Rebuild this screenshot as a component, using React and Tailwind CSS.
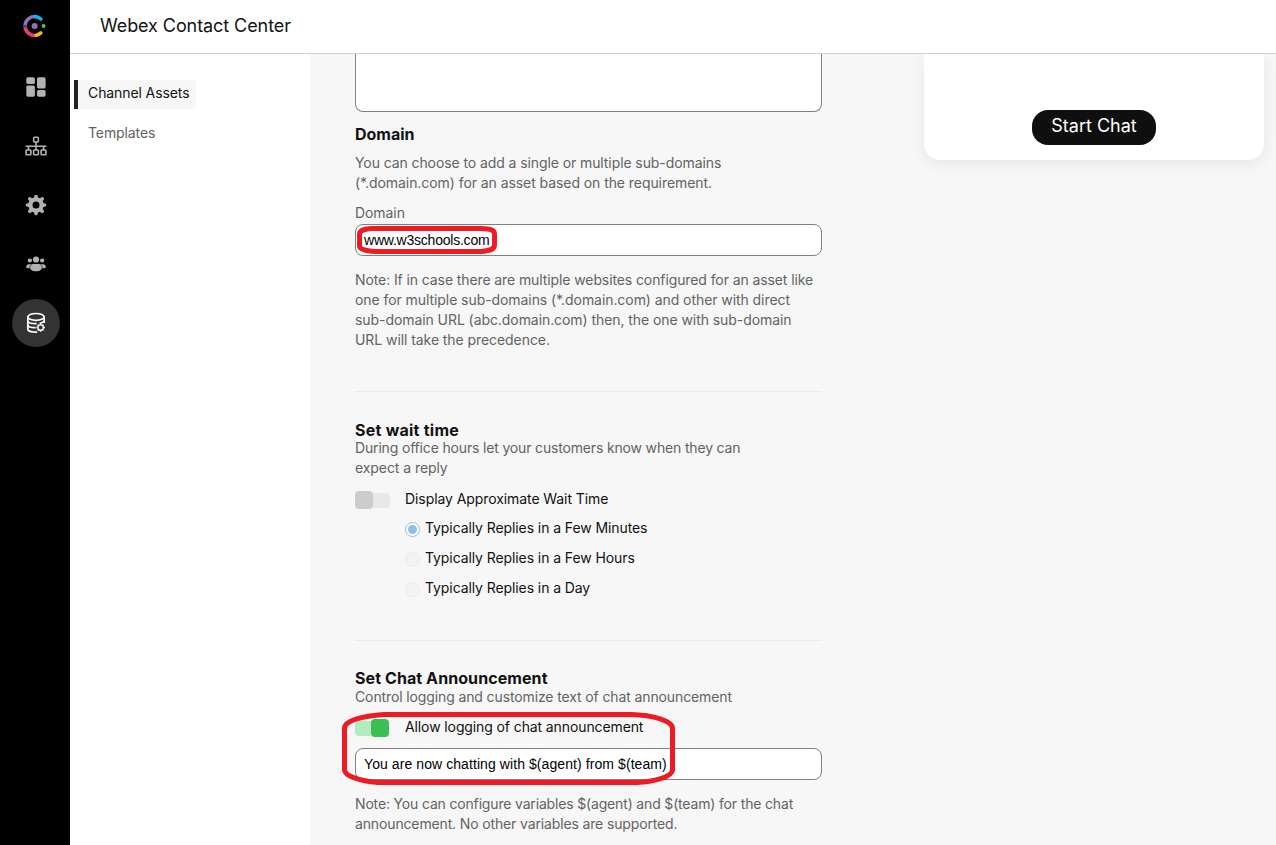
import React from "react";

const GREY = "#b2b2b2";

function Logo() {
  return (
    <svg width="24" height="24" viewBox="0 0 24 24" fill="none" strokeWidth="3.6" className="block">
      <path d="M2.1 12A9.4 9.4 0 0 1 12.5 2.6" stroke="#8f6fb8" />
      <path d="M12.5 2.6A9.4 9.4 0 0 1 17.8 5" stroke="#07b8ec" strokeLinecap="round" />
      <path d="M2.1 12.4A9.4 9.4 0 0 0 12.5 21.4" stroke="#f0386b" />
      <path d="M13.2 21.3A9.4 9.4 0 0 0 17.8 18.9" stroke="#fcb514" strokeLinecap="round" />
      <path d="M2.1 10.9V13.4" stroke="#16587c" />
      <circle cx="11.6" cy="12" r="3" fill="#8f6fb8" />
      <circle cx="20.6" cy="12" r="1.9" fill="#6abf4b" />
    </svg>
  );
}

function DashboardIcon() {
  return (
    <svg width="20" height="20" viewBox="0 0 20 20" fill={GREY} className="block">
      <rect x="0.3" y="0.3" width="8.6" height="6.6" rx="1.6" />
      <rect x="0.3" y="8.6" width="8.6" height="11.1" rx="1.6" />
      <rect x="11" y="0.3" width="8.6" height="11.1" rx="1.6" />
      <rect x="11" y="13.1" width="8.6" height="6.6" rx="1.6" />
    </svg>
  );
}

function OrgIcon() {
  return (
    <svg width="22" height="20" viewBox="0 0 22 20" fill="none" stroke={GREY} strokeWidth="1.6" className="block">
      <rect x="8.7" y="1.2" width="4.6" height="4.8" rx="0.8" />
      <path d="M11 5.8V14M0.6 10.2H21.4M3.4 10.2V14M18.6 10.2V14" />
      <rect x="1.1" y="14" width="4.8" height="4.8" rx="0.8" />
      <rect x="8.6" y="14" width="4.8" height="4.8" rx="0.8" />
      <rect x="16.1" y="14" width="4.8" height="4.8" rx="0.8" />
    </svg>
  );
}

function GearIcon() {
  return (
    <svg width="22" height="22" viewBox="-11 -11 22 22" className="block">
      <circle r="5.6" fill="none" stroke={GREY} strokeWidth="4.2" />
      <g stroke={GREY} strokeWidth="3.6" strokeLinecap="round">
        <path d="M0-6.5V-8.5M0 6.5V8.5M-6.5 0H-8.5M6.5 0H8.5" />
        <path d="M-5-5L-6.2-6.2M5-5L6.2-6.2M-5 5L-6.2 6.2M5 5L6.2 6.2" />
      </g>
    </svg>
  );
}

function TeamIcon() {
  return (
    <svg width="20" height="16" viewBox="0 0 20 16" fill={GREY} className="block">
      <circle cx="10" cy="3.5" r="3.1" />
      <circle cx="3.9" cy="4.5" r="2.1" />
      <circle cx="16.1" cy="4.5" r="2.1" />
      <path d="M4.1 11.6C4.1 9 5.4 8 7 8H13C14.6 8 15.9 9 15.9 11.6C15.9 14 13.5 15.3 10 15.3S4.1 14 4.1 11.6Z" />
      <path d="M4.6 8C1.6 8 .2 9 .2 10.7C.2 12 1.5 12.5 3.7 12.3C3.4 10.4 3.9 9 5.3 8Z" />
      <path d="M15.4 8C18.4 8 19.8 9 19.8 10.7C19.8 12 18.5 12.5 16.3 12.3C16.6 10.4 16.1 9 14.7 8Z" />
    </svg>
  );
}

function DatabaseIcon() {
  return (
    <svg width="22" height="22" viewBox="0 0 22 22" fill="none" stroke="#fff" strokeWidth="1.7" className="block">
      <ellipse cx="11" cy="4.9" rx="8.2" ry="3.4" />
      <path d="M2.8 5V17.2C2.8 18.8 6.2 20.2 12.2 20.2M19.2 5V11" />
      <path d="M2.8 9.2C3.4 10.8 7 11.8 11.7 11.7M2.8 13.2C3.4 14.8 6.8 15.7 10.6 15.6M18.9 9.2C18 10.3 16.6 11 14.6 11.4" />
      <circle cx="15.6" cy="15.6" r="2.7" strokeWidth="1.4" />
      <path strokeWidth="1.5" d="M15.6 12.6V11.4M15.6 18.6V19.8M12.6 15.6H11.4M18.6 15.6H19.8M13.5 13.5L12.7 12.7M17.7 13.5L18.5 12.7M13.5 17.7L12.7 18.5M17.7 17.7L18.5 18.5" />
    </svg>
  );
}

function Sidebar() {
  return (
    <aside className="flex w-[70px] shrink-0 flex-col items-center bg-black pl-0.5 pt-[14px]">
      <div className="mr-0.5 flex h-6"><Logo /></div>
      <nav className="mt-[25px] flex flex-col gap-[11px]">
        <div className="flex size-12 items-center justify-center"><DashboardIcon /></div>
        <div className="flex size-12 items-center justify-center"><OrgIcon /></div>
        <div className="flex size-12 items-center justify-center"><GearIcon /></div>
        <div className="flex size-12 items-center justify-center"><TeamIcon /></div>
        <div className="flex size-12 items-center justify-center rounded-full bg-[#333]"><DatabaseIcon /></div>
      </nav>
    </aside>
  );
}

function Line({ children, className = "tracking-[-0.07px]" }) {
  return <span className={"block h-5 whitespace-nowrap leading-5 " + className}>{children}</span>;
}

function Radio({ label, checked }) {
  return (
    <label className="flex h-[30px] items-start">
      <span className={"mt-1 flex size-[15px] items-center justify-center rounded-full border " + (checked ? "border-[#93bce6] bg-white" : "border-[#ebebeb] bg-[#f3f3f3]")}>
        {checked && <span className="size-[9px] rounded-full bg-[#93bce6]" />}
      </span>
      <Line className="ml-[5px] tracking-[-0.09px] text-[#111]">{label}</Line>
    </label>
  );
}

export default function App() {
  return (
    <div className="flex h-[845px] w-[1276px] overflow-hidden bg-white font-['Inter',Arial,sans-serif] text-[14px] text-[#636363]">
      <Sidebar />
      <div className="flex min-w-0 flex-1 flex-col">
        <header className="flex h-[54px] shrink-0 items-center border-b border-[#cfcfcf] pb-0.5 pl-[30px] text-[18px] text-[#121212]">
          <span className="tracking-[-0.08px]">Webex Contact Center</span>
        </header>
        <div className="flex min-h-0 flex-1">
          <nav className="w-60 shrink-0 pl-1 pt-[26px]">
            <div className="h-[29px] w-[122px] border-l-4 border-[#222] bg-[#f7f7f7] pl-2.5 pt-[3px] text-[#121212]">
              <Line className="tracking-[-0.1px]">Channel Assets</Line>
            </div>
            <div className="pl-3.5 pt-[14px]"><Line className="tracking-[-0.1px]">Templates</Line></div>
          </nav>
          <main className="flex min-w-0 flex-1 bg-[#f7f7f7] pl-[45px]">
            <div className="relative w-[467px] shrink-0">
              <div className="h-[58px] rounded-b-lg border border-t-0 border-[#808080] bg-white" />
              <h2 className="mt-3 h-5 text-[16px] font-bold leading-5 text-[#121212]">Domain</h2>
              <div className="mt-[9px]">
                <Line className="tracking-[-0.09px]">You can choose to add a single or multiple sub-domains</Line>
                <Line>(*.domain.com) for an asset based on the requirement.</Line>
              </div>
              <div className="mt-2.5"><Line>Domain</Line></div>
              <div className="mt-px flex h-8 items-center rounded-lg border border-[#808080] bg-white pl-2 font-['Liberation_Sans',Arial,sans-serif] text-black">
                <Line className="tracking-[-0.22px]">www.w3schools.com</Line>
              </div>
              <div className="mt-[14px]">
                <Line className="tracking-[-0.1px]">Note: If in case there are multiple websites configured for an asset like</Line>
                <Line>one for multiple sub-domains (*.domain.com) and other with direct</Line>
                <Line>sub-domain URL (abc.domain.com) then, the one with sub-domain</Line>
                <Line>URL will take the precedence.</Line>
              </div>
              <div className="mt-[41px] h-px bg-[#ebebeb]" />
              <h2 className="mt-[28px] h-[18px] text-[16px] font-bold leading-5 tracking-[0.25px] text-[#121212]">Set wait time</h2>
              <Line className="tracking-[-0.165px]">During office hours let your customers know when they can</Line>
              <Line>expect a reply</Line>
              <div className="mt-[11px] flex h-5">
                <span className="mt-0.5 flex h-[18px] w-[35px] items-center">
                  <span className="h-[18px] w-[18px] rounded-[4px] bg-[#cccccc]" />
                  <span className="h-[15px] w-[17px] rounded-r-[4px] bg-[#e9e8e9]" />
                </span>
                <Line className="ml-[15px] tracking-[-0.08px] text-[#111]">Display Approximate Wait Time</Line>
              </div>
              <div className="ml-[50px] mt-[9px]">
                <Radio checked label="Typically Replies in a Few Minutes" />
                <Radio label="Typically Replies in a Few Hours" />
                <Radio label="Typically Replies in a Day" />
              </div>
              <div className="mt-8 h-px bg-[#ebebeb]" />
              <h2 className="mt-[27px] h-[19px] text-[16px] font-bold leading-5 tracking-[0.08px] text-[#121212]">Set Chat Announcement</h2>
              <Line className="tracking-[-0.12px]">Control logging and customize text of chat announcement</Line>
              <div className="mt-2.5 flex h-5">
                <span className="mt-0.5 flex h-[18px] w-[35px] items-center">
                  <span className="h-[15px] w-4 rounded-l-[4px] bg-[#b4ecc0]" />
                  <span className="h-[18px] w-[18px] rounded-[4px] bg-[#3cc055]" />
                </span>
                <Line className="ml-[15px] tracking-[-0.11px] text-[#111]">Allow logging of chat announcement</Line>
              </div>
              <div className="mt-[11px] flex h-8 items-center rounded-lg border border-[#808080] bg-white pl-2 font-['Liberation_Sans',Arial,sans-serif] text-black">
                <Line className="tracking-[0.08px]">You are now chatting with $(agent) from $(team)</Line>
              </div>
              <div className="mt-[14px]">
                <Line className="tracking-[-0.165px]">Note: You can configure variables $(agent) and $(team) for the chat</Line>
                <Line className="tracking-[-0.14px]">announcement. No other variables are supported.</Line>
              </div>
              <svg className="absolute left-[1px] top-[170px]" width="144" height="34" fill="none" stroke="#ed1c24" strokeWidth="5">
                <path d="M16 4.5H125C135 5 138.500 6 138.500 10V21C138.500 25 135 26.500 125 27.500H20C8 27 3.500 25 3.500 22V10C4 6 8 5 16 4.500Z" />
              </svg>
              <svg className="absolute left-[-14px] top-[656px]" width="336" height="78" fill="none" stroke="#ed1c24" strokeWidth="5">
                <path d="M43 4.500H290C313 5 331 11 331.500 18V60C331 67 312 72 296 72.500H37C18 71 4 66 3.500 60V18C4 11 20 6 43 4.500Z" />
              </svg>
            </div>
            <div className="ml-[102px] flex h-[106px] w-[340px] shrink-0 items-end justify-center rounded-b-[16px] bg-white pb-[15px] shadow-[0_4px_16px_rgba(0,0,0,0.07)] [clip-path:inset(0_-30px_-30px_-30px)]">
              <button className="h-[35px] w-[124px] rounded-[16px] bg-[#0f0f0f] pb-1 text-[18px] leading-[31px] text-white">Start Chat</button>
            </div>
          </main>
        </div>
      </div>
    </div>
  );
}
